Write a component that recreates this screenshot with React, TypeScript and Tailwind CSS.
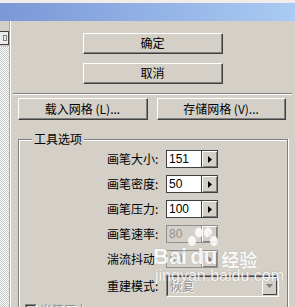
import React from "react";

const cjk = "font-['Noto_Sans_CJK_SC','Noto_Sans',sans-serif]";

function Btn({ w, children }: { w: string; children: React.ReactNode }) {
  return (
    <div
      className={`${w} h-full shrink-0 border-t border-l border-t-white border-l-white border-r border-b border-r-[#404040] border-b-[#404040] bg-[#d4d0c8]`}
    >
      <div className="w-full h-full border-r border-b border-r-[#808080] border-b-[#808080] flex items-center justify-center text-[12px] leading-none text-black">
        {children}
      </div>
    </div>
  );
}

function Tri({ dis }: { dis?: boolean }) {
  return (
    <svg width="4" height="7" viewBox="0 0 4 7">
      <path d="M0 0 L4 3.5 L0 7 Z" fill={dis ? "#808080" : "#000"} />
    </svg>
  );
}

function NumInput({ value, dis }: { value: string; dis?: boolean }) {
  return (
    <div
      className={`flex shrink-0 w-[52px] h-[18px] border ${dis ? "border-[#909090] bg-[#d4d0c8]" : "border-[#404040] bg-white"}`}
    >
      <div
        className={`flex-1 flex items-center pl-[2px] text-[12px] leading-none font-['Liberation_Sans',sans-serif] ${dis ? "text-[#909090]" : "text-black"}`}
      >
        {value}
      </div>
      <div
        className={`w-[16px] h-full flex items-center justify-center bg-[#d4d0c8] border-l ${dis ? "border-l-[#909090]" : "border-l-[#404040]"} shadow-[inset_1px_1px_0_#fff,inset_-1px_-1px_0_#808080]`}
      >
        <Tri dis={dis} />
      </div>
    </div>
  );
}

function Row({ label, children }: { label: string; children: React.ReactNode }) {
  return (
    <div className="flex shrink-0 items-center h-[18px] ml-[88px]">
      <div className="w-[59px] text-[12px] leading-none text-black whitespace-nowrap">{label}</div>
      {children}
    </div>
  );
}

export default function App() {
  return (
    <div className={`relative w-[295px] h-[307px] overflow-hidden bg-[#d4d0c8] flex flex-col ${cjk}`}>
      <div className="h-[3px] shrink-0 bg-[#f2ecea]" />
      <div className="h-[18px] shrink-0 bg-gradient-to-r from-[#7b97d6] to-[#aacbf3]" />
      <div className="flex flex-1 min-h-0">
        <div className="w-[9px] shrink-0 flex flex-col">
          <div className="h-[10px] shrink-0" />
          <div className="h-[14px] shrink-0 border-y border-r border-[#404040] bg-[#ececec] flex items-center justify-end pr-[1px]">
            <div className="w-[4px] h-[6px] border border-[#808080]" />
          </div>
          <div className="h-[2px] shrink-0" />
          <div className="flex-1 bg-[repeating-conic-gradient(#c8c8c8_0_25%,#ffffff_0_50%)] bg-[length:2px_2px]" />
        </div>
        <div className="w-px shrink-0 bg-[#a8a8a8]" />
        <div className="w-px shrink-0 bg-white" />
        <div className="flex-1 flex flex-col">
          <div className="shrink-0 mt-[12px] ml-[72px] h-[21px] flex">
            <Btn w="w-[140px]">确定</Btn>
          </div>
          <div className="shrink-0 mt-[9px] ml-[72px] h-[21px] flex">
            <Btn w="w-[140px]">取消</Btn>
          </div>
          <div className="shrink-0 mt-[9px] ml-[2px] mr-[3px] h-[2px] border-t border-t-[#808080] border-b border-b-white" />
          <div className="shrink-0 mt-[3px] ml-[7px] h-[22px] flex gap-[9px]">
            <Btn w="w-[130px]">载入网格 (L)...</Btn>
            <Btn w="w-[129px]">存储网格 (V)...</Btn>
          </div>
          <div className="relative shrink-0 mt-[19px] ml-[7px] w-[270px] h-[200px] border-t border-l border-t-[#808080] border-l-[#808080] border-r border-r-[#808080] shadow-[inset_1px_1px_0_#fff,1px_0_0_#fff]">
            <div className="absolute -top-[7px] left-[13px] px-[2px] bg-[#d4d0c8] text-[12px] leading-none text-black">
              工具选项
            </div>
            <div className="flex flex-col gap-[7px] pt-[10px]">
              <Row label="画笔大小:">
                <NumInput value="151" />
              </Row>
              <Row label="画笔密度:">
                <NumInput value="50" />
              </Row>
              <Row label="画笔压力:">
                <NumInput value="100" />
              </Row>
              <Row label="画笔速率:">
                <NumInput value="80" dis />
              </Row>
              <Row label="湍流抖动:">
                <NumInput value="50" dis />
              </Row>
              <div className="flex shrink-0 items-center h-[22px] ml-[88px]">
                <div className="w-[59px] text-[12px] leading-none text-black whitespace-nowrap">重建模式:</div>
                <div className="w-[113px] h-[22px] border border-t-[#808080] border-l-[#808080] border-b-white border-r-white">
                  <div className="w-full h-full border border-t-[#404040] border-l-[#404040] border-b-[#d4d0c8] border-r-[#d4d0c8] flex items-center">
                    <div className="flex-1 pl-[2px] text-[12px] leading-none text-[#909090] [text-shadow:1px_1px_0_#fff]">恢复</div>
                    <div className="w-[15px] h-full flex items-center justify-center bg-[#d4d0c8] shadow-[inset_1px_1px_0_#fff,inset_-1px_-1px_0_#404040]">
                      <svg width="7" height="4" viewBox="0 0 7 4">
                        <path d="M0 0 L7 0 L3.5 4 Z" fill="#808080" />
                      </svg>
                    </div>
                  </div>
                </div>
              </div>
              <div className="flex shrink-0 items-center h-[13px] ml-[6px] -mt-[1px] gap-[3px]">
                <div className="w-[12px] h-[12px] border border-t-[#808080] border-l-[#808080] border-b-white border-r-white">
                  <div className="w-full h-full border border-t-[#404040] border-l-[#404040] border-b-[#d4d0c8] border-r-[#d4d0c8] bg-[#d4d0c8]" />
                </div>
                <div className="text-[12px] leading-none text-[#909090] [text-shadow:1px_1px_0_#fff]">光笔压力</div>
              </div>
            </div>
          </div>
        </div>
      </div>

      {/* watermark */}
      <div className="absolute left-[150px] top-[226px] w-[130px] h-[60px] pointer-events-none opacity-85">
        <svg className="absolute left-[36px] top-[1px]" width="34" height="30" viewBox="0 0 34 30">
          <ellipse cx="6" cy="14" rx="4" ry="5" fill="#fff" />
          <ellipse cx="13" cy="5.5" rx="4" ry="5" fill="#fff" />
          <ellipse cx="22" cy="5.5" rx="4" ry="5" fill="#fff" />
          <ellipse cx="28" cy="14" rx="4" ry="5" fill="#fff" />
        </svg>
        <div className="absolute left-[3px] top-[20px] flex items-end text-white font-bold font-['Liberation_Sans',sans-serif] text-[22px] leading-none [text-shadow:0_0_1px_#999]">
          <span>Bai</span>
          <span className="ml-[3px]">du</span>
          <span className={`ml-[4px] text-[18px] ${cjk}`}>经验</span>
        </div>
        <div className="absolute left-[5px] top-[42px] text-white text-[16px] leading-none font-['Liberation_Sans',sans-serif] [text-shadow:0_0_1px_#888]">
          jingyan.baidu.com
        </div>
      </div>
    </div>
  );
}
